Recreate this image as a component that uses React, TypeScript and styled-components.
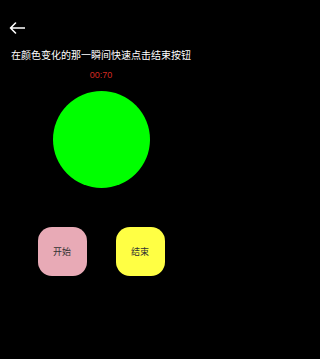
import styled, { createGlobalStyle } from "styled-components";

const GlobalStyle = createGlobalStyle`
  html, body {
    margin: 0;
    padding: 0;
    background: #000;
  }
  body {
    font-family: "Noto Sans CJK SC", "Noto Sans", sans-serif;
  }
`;

const Page = styled.div`
  width: 202px;
  height: 359px;
  background: #000;
  display: flex;
  flex-direction: column;
  align-items: center;
  overflow: hidden;
`;

const TopBar = styled.div`
  align-self: stretch;
  height: 40px;
  display: flex;
  align-items: center;
  padding: 16px 0 0 9px;
  box-sizing: border-box;
`;

const BackButton = styled.button`
  background: none;
  border: none;
  padding: 0;
  width: 16px;
  height: 12px;
  display: flex;
  color: #fff;
`;

const Title = styled.div`
  margin-top: 7px;
  font-size: 10px;
  line-height: 16px;
  color: #fff;
  white-space: nowrap;
`;

const Timer = styled.div`
  margin-top: 6px;
  font-family: "Liberation Sans", sans-serif;
  font-size: 9px;
  line-height: 12px;
  color: #d42a20;
`;

const Light = styled.div<{ $color: string }>`
  margin-top: 10px;
  width: 97px;
  height: 97px;
  border-radius: 50%;
  background: ${(p) => p.$color};
`;

const Buttons = styled.div`
  margin-top: 39px;
  display: flex;
  gap: 29px;
`;

const Action = styled.button<{ $bg: string }>`
  width: 49px;
  height: 49px;
  border: none;
  border-radius: 14px;
  background: ${(p) => p.$bg};
  color: #333;
  font-family: "Noto Sans CJK SC", sans-serif;
  font-size: 9px;
  padding: 0;
  display: flex;
  align-items: center;
  justify-content: center;
`;

const App = () => {
  return (
    <>
      <GlobalStyle />
      <Page>
        <TopBar>
          <BackButton>
            <svg width="16" height="12" viewBox="0 0 16 12" fill="none">
              <path
                d="M15.5 6H1.5M6.5 1L1.5 6L6.5 11"
                stroke="currentColor"
                strokeWidth="1.6"
                strokeLinecap="round"
                strokeLinejoin="round"
              />
            </svg>
          </BackButton>
        </TopBar>
        <Title>在颜色变化的那一瞬间快速点击结束按钮</Title>
        <Timer>00:70</Timer>
        <Light $color="#00ff00" />
        <Buttons>
          <Action $bg="#e8aab6">开始</Action>
          <Action $bg="#ffff44">结束</Action>
        </Buttons>
      </Page>
    </>
  );
};

export default App;
